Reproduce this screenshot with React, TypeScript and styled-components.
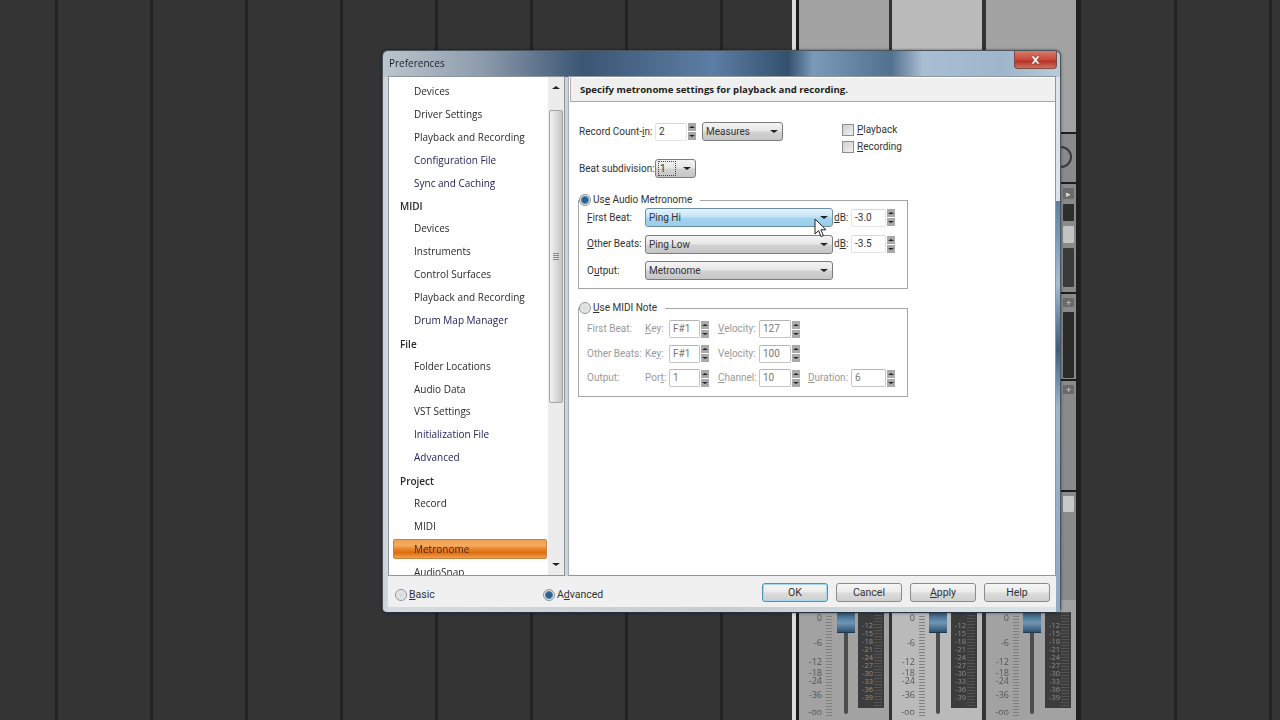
import styled, { createGlobalStyle } from "styled-components";

const GlobalStyle = createGlobalStyle`
  html, body {
    margin: 0;
    padding: 0;
    background: #333;
  }
  #root {
    width: 1280px;
    height: 720px;
    overflow: hidden;
  }
`;

const Stage = styled.div`
  position: relative;
  width: 1280px;
  height: 720px;
  overflow: hidden;
  display: flex;
  font-family: "Open Sans", "Liberation Sans", sans-serif;
  filter: blur(0.35px);
`;

// background of the daw: empty dark tracks and the mixer strips
const Track = styled.div<{ $w: number }>`
  flex: none;
  width: ${(p) => p.$w}px;
  height: 100%;
  background: #343434;
  border-right: 3px solid #232323;
`;

const LightEdge = styled.div`
  flex: none;
  width: 4px;
  background: #dcdcdc;
  border-right: 3px solid #1c1c1c;
`;

const Strip = styled.div<{ $tone: string; $gap: number }>`
  flex: none;
  position: relative;
  width: 90px;
  height: 100%;
  margin-right: ${(p) => p.$gap}px;
  background: ${(p) => p.$tone};
  display: flex;
  flex-direction: column;
  justify-content: flex-end;
`;

const EndLine = styled.div`
  flex: none;
  width: 5px;
  background: #202020;
`;

const Rack = styled.div`
  position: absolute;
  top: 0;
  right: 0;
  width: 15px;
  height: 100%;
  padding-top: 132px;
  box-sizing: border-box;
  display: flex;
  flex-direction: column;
`;

const RackSection = styled.div<{ $h: number }>`
  flex: none;
  height: ${(p) => p.$h}px;
  box-sizing: border-box;
  border-top: 2px solid #1d1d1d;
  background: #8a8a8a;
  padding: 4px 2px 0;
  display: flex;
  flex-direction: column;
  gap: 5px;
`;

const RackBlock = styled.div<{ $h: number; $tone: string }>`
  flex: none;
  height: ${(p) => p.$h}px;
  background: ${(p) => p.$tone};
  border-radius: 1px;
  color: #ddd;
  font-size: 9px;
  line-height: ${(p) => p.$h}px;
  text-align: center;
`;

const Knob = styled.div`
  width: 22px;
  height: 22px;
  margin: 8px 0 0 -13px;
  box-sizing: border-box;
  border: 2px solid #3a3a3a;
  border-radius: 50%;
`;

const FaderArea = styled.div`
  position: relative;
  flex: none;
  height: 108px;
`;

const ScaleLabel = styled.span<{ $y: number }>`
  position: absolute;
  top: ${(p) => p.$y}px;
  left: 4px;
  width: 19px;
  text-align: right;
  font-size: 9px;
  line-height: 8px;
  color: #555;
`;

const Ticks = styled.div`
  position: absolute;
  left: 27px;
  top: 4px;
  width: 6px;
  height: 101px;
  background: repeating-linear-gradient(#7f7f7f 0 1px, transparent 1px 3px);
`;

const FaderSlot = styled.div<{ $x: number }>`
  position: absolute;
  left: ${(p) => p.$x + 7}px;
  top: 10px;
  width: 4px;
  height: 92px;
  background: #4c4c4c;
  border-radius: 2px;
`;

const FaderCap = styled.div<{ $x: number }>`
  position: absolute;
  left: ${(p) => p.$x}px;
  top: 0;
  width: 18px;
  height: 20px;
  background: linear-gradient(#2e5170, #5d87a8 40%, #6f95b3 55%, #2f5271);
  border-bottom: 1px solid #20384e;
`;

const Meter = styled.div`
  position: absolute;
  left: 59px;
  top: 0;
  width: 26px;
  height: 96px;
  background: #3c3c3c;
  padding-top: 9px;
  box-sizing: border-box;
`;

const MeterLabel = styled.div`
  width: 15px;
  height: 8px;
  text-align: right;
  font-size: 7.5px;
  line-height: 8px;
  color: #8f8f8f;
`;

const Bars = styled.div`
  position: absolute;
  right: 2px;
  top: 0;
  width: 8px;
  height: 100%;
  background: repeating-linear-gradient(#555 0 1px, #3c3c3c 1px 3px);
`;

// the preferences dialog floats over the mixer
const Dialog = styled.div`
  position: absolute;
  left: 382px;
  top: 50px;
  width: 679px;
  height: 563px;
  box-sizing: border-box;
  padding: 0 4px 5px 5px;
  border-radius: 6px 6px 5px 5px;
  border: 1px solid #4b5560;
  border-bottom-color: #26323d;
  background:
    linear-gradient(90deg, #bcc5cd 0, #8c9bab 100px, #3b5574 200px, #5c7ea4 330px, #33506e 405px, #7b9ab9 430px, #52708f 508px, #a9bed2 540px, #9eb5cb 620px, #b9cada 100%) top / 100% 26px no-repeat,
    linear-gradient(90deg, #c9d1d8 0, #d5dbe0 6px, #c6ccd2 340px, #dce4ea 100%) top 26px left / 100% 100% no-repeat;
  display: flex;
  flex-direction: column;
  box-shadow: 0 0 3px rgba(0, 0, 0, 0.5);
`;

const SideGlass = styled.div`
  position: absolute;
  right: 0;
  top: 150px;
  width: 4px;
  bottom: 0;
  background: linear-gradient(#5e7d9e, #a4bdd2 20%, #3f5c7c 36%, #9db6cc 50%, #8fa9c0 100%);
`;

const TitleBar = styled.div`
  flex: none;
  height: 25px;
  display: flex;
  align-items: center;
  justify-content: space-between;
`;

const Title = styled.span`
  font-size: 10px;
  color: #1b2229;
  margin: -1px 0 0 1px;
`;

const CloseButton = styled.button`
  width: 43px;
  height: 18px;
  margin: -7px -1px 0 0;
  padding: 0;
  border: 1px solid #7a4a44;
  border-top: none;
  border-radius: 0 0 4px 4px;
  background: linear-gradient(#d97a6c, #c84b3b 50%, #b53527 60%, #d0705f);
  display: flex;
  align-items: center;
  justify-content: center;
`;

const Body = styled.div`
  flex: 1;
  min-height: 0;
  display: flex;
  gap: 3px;
`;

const ListPane = styled.div`
  flex: none;
  width: 177px;
  box-sizing: border-box;
  background: #fff;
  border: 1px solid #8e979e;
  display: flex;
  position: relative;
`;

const List = styled.div`
  flex: 1;
  min-width: 0;
  overflow: hidden;
  padding: 4px 1px 0 4px;
`;

const ListRow = styled.div<{ $kind: "sub" | "head" | "link" | "sel" }>`
  height: 20px;
  margin-bottom: 2.9px;
  box-sizing: border-box;
  padding-left: ${(p) => (p.$kind === "head" ? 7 : 21)}px;
  font-size: 10px;
  line-height: ${(p) => (p.$kind === "head" ? 22 : 20)}px;
  white-space: nowrap;
  font-weight: ${(p) => (p.$kind === "head" ? 600 : 400)};
  color: ${(p) => (p.$kind === "link" ? "#23235e" : p.$kind === "sel" ? "#4a2a2a" : "#2a2a2a")};
  ${(p) =>
    p.$kind === "sel" &&
    `background: linear-gradient(#f0a050, #f5ac60 30%, #e8862c 50%, #dd6c10 70%, #f0a050);
     border: 1px solid #c9803a;
     border-radius: 2px;
     line-height: 18px;
     padding-left: 20px;`}
`;

const ScrollColumn = styled.div`
  flex: none;
  width: 16px;
  background: #ececec;
  display: flex;
  flex-direction: column;
  align-items: center;
`;

const ScrollEnd = styled.div`
  flex: none;
  height: 21px;
  width: 100%;
  display: flex;
  align-items: center;
  justify-content: center;
`;

const ScrollTrack = styled.div`
  flex: 1;
  width: 100%;
`;

const ScrollThumb = styled.div`
  width: 14px;
  height: 293px;
  margin: 12px 0 0 1px;
  box-sizing: border-box;
  border: 1px solid #a4a4a4;
  border-radius: 2px;
  background: linear-gradient(90deg, #f2f2f2, #dcdcdc 50%, #c4c4c4);
  display: flex;
  align-items: center;
  justify-content: center;
`;

const Grip = styled.div`
  width: 6px;
  height: 7px;
  background: repeating-linear-gradient(#8a8a8a 0 1px, transparent 1px 2px);
`;

const Arrow = styled.div<{ $up?: boolean; $size?: number }>`
  flex: none;
  width: 0;
  height: 0;
  border-left: ${(p) => p.$size ?? 4}px solid transparent;
  border-right: ${(p) => p.$size ?? 4}px solid transparent;
  ${(p) => (p.$up ? "border-bottom" : "border-top")}: ${(p) => (p.$size ?? 4) - 1}px solid #222;
`;

const Panel = styled.div`
  flex: 1;
  min-width: 0;
  box-sizing: border-box;
  background: #fff;
  border: 1px solid #8e979e;
  border-left-color: #aab;
  padding: 0;
`;

const PanelHeader = styled.div`
  height: 23px;
  margin: 1px 0 0 1px;
  padding-left: 9px;
  background: #f0f0f0;
  border-bottom: 1px solid #a8a8a8;
  border-left: 1px solid #b0b0b0;
  font-size: 9.6px;
  font-weight: 700;
  line-height: 24px;
  color: #1c1c1c;
`;

const PanelBody = styled.div`
  padding: 20px 0 0 10px;
  display: flex;
  flex-direction: column;
  font-family: Roboto, "Open Sans", sans-serif;
`;

const TopRows = styled.div`
  display: grid;
  grid-template-columns: 263px auto;
  height: 71px;
`;

const Line = styled.div<{ $gap?: number }>`
  display: flex;
  align-items: center;
  gap: ${(p) => p.$gap ?? 0}px;
`;

const Label = styled.span<{ $w?: number; $off?: boolean }>`
  flex: none;
  width: ${(p) => (p.$w ? `${p.$w}px` : "auto")};
  font-size: 10px;
  line-height: 12px;
  color: ${(p) => (p.$off ? "#9a9a9a" : "#333")};
  white-space: nowrap;
`;

const TextBox = styled.div<{ $w: number; $off?: boolean }>`
  flex: none;
  width: ${(p) => p.$w}px;
  height: 18px;
  box-sizing: border-box;
  padding-left: 3px;
  border: 1px solid ${(p) => (p.$off ? "#c4c4c4" : "#e4e4e4")};
  border-top-color: ${(p) => (p.$off ? "#b4b4b4" : "#d8d8d8")};
  border-radius: 2px;
  font-size: 10px;
  line-height: 16px;
  color: ${(p) => (p.$off ? "#777" : "#333")};
`;

const SpinWrap = styled.div`
  flex: none;
  width: 8px;
  height: 17px;
  margin: 0 1px;
  display: flex;
  flex-direction: column;
  gap: 1px;
`;

const SpinPart = styled.div<{ $off?: boolean }>`
  flex: 1;
  background: ${(p) => (p.$off ? "#aaa" : "#a8a8a8")};
  display: flex;
  align-items: center;
  justify-content: center;
`;

const Select = styled.div<{ $w: number; $hot?: boolean }>`
  flex: none;
  width: ${(p) => p.$w}px;
  height: 19px;
  box-sizing: border-box;
  padding: 0 4px 0 3px;
  border: 1px solid ${(p) => (p.$hot ? "#6a8ea6" : "#7c7c7c")};
  border-radius: 3px;
  background: ${(p) =>
    p.$hot
      ? "linear-gradient(#e6f4fc, #c2e3f6 48%, #a3d4f0 52%, #9acdea)"
      : "linear-gradient(#f4f4f4, #e6e6e6 48%, #d2d2d2 52%, #c6c6c6)"};
  display: flex;
  align-items: center;
  justify-content: space-between;
  font-size: 10px;
  color: #333;
`;

const FocusValue = styled.span`
  border: 1px dotted #444;
  padding: 0 9px 0 1px;
  line-height: 13px;
  margin-left: -1px;
`;

const Checks = styled.div`
  display: flex;
  flex-direction: column;
  gap: 5px;
  margin-top: 2px;
`;

const CheckBox = styled.div`
  flex: none;
  width: 12px;
  height: 12px;
  box-sizing: border-box;
  border: 1px solid #8e8e8e;
  background: linear-gradient(135deg, #cfcfcf, #f0f0f0);
`;

const Radio = styled.div<{ $on?: boolean }>`
  flex: none;
  width: 12px;
  height: 12px;
  box-sizing: border-box;
  border: 1px solid #8e9499;
  border-radius: 50%;
  background: ${(p) =>
    p.$on ? "radial-gradient(circle, #2f5f8a 0 2.5px, #4f86ad 3.5px, #dfe6ea 4.5px)" : "radial-gradient(circle, #d8d8d8, #efefef)"};
`;

const Group = styled.fieldset<{ $h: number; $top?: number }>`
  margin: ${(p) => p.$top ?? 0}px 0 0 -1px;
  box-sizing: border-box;
  width: 330px;
  height: ${(p) => p.$h}px;
  border: 1px solid #a6a6a6;
  padding: 0 0 0 8px;
`;

const GroupTitle = styled.legend`
  padding: 0 8px 0 0;
  margin-left: -8px;
  display: flex;
  align-items: center;
  gap: 2px;
  font-size: 10px;
  line-height: 14px;
  color: #333;
`;

const BeatRows = styled.div<{ $gap: number; $top: number }>`
  display: flex;
  flex-direction: column;
  gap: ${(p) => p.$gap}px;
  margin-top: ${(p) => p.$top}px;
`;

const Footer = styled.div`
  flex: none;
  height: 31px;
  background: #f0f0f0;
  display: flex;
  align-items: center;
  position: relative;
  font-family: Roboto, "Open Sans", sans-serif;
`;

const FooterChoice = styled.div<{ $w: number; $left?: number }>`
  flex: none;
  width: ${(p) => p.$w}px;
  margin: 6px 0 0 ${(p) => p.$left ?? 0}px;
  display: flex;
  align-items: center;
  gap: 2px;
  font-size: 10.5px;
  color: #333;
`;

const ButtonRow = styled.div`
  margin-left: auto;
  margin-right: 6px;
  margin-top: 2px;
  display: flex;
  gap: 8px;
`;

const DialogButton = styled.button<{ $primary?: boolean }>`
  width: 66px;
  height: 19px;
  padding: 0;
  box-sizing: border-box;
  border: 1px solid ${(p) => (p.$primary ? "#4f93b3" : "#8a8a8a")};
  border-radius: 3px;
  box-shadow: ${(p) => (p.$primary ? "inset 0 0 0 1px #a5d8ee" : "none")};
  background: linear-gradient(#f6f6f6, #ebebeb 48%, #dcdcdc 52%, #cfcfcf);
  font-family: inherit;
  font-size: 10.5px;
  color: #333;
`;

const Pointer = styled.svg`
  position: absolute;
  left: 814px;
  top: 218px;
`;

const listRows: { text: string; kind: "sub" | "head" | "link" | "sel" }[] = [
  { text: "Devices", kind: "sub" },
  { text: "Driver Settings", kind: "sub" },
  { text: "Playback and Recording", kind: "sub" },
  { text: "Configuration File", kind: "link" },
  { text: "Sync and Caching", kind: "link" },
  { text: "MIDI", kind: "head" },
  { text: "Devices", kind: "sub" },
  { text: "Instruments", kind: "sub" },
  { text: "Control Surfaces", kind: "sub" },
  { text: "Playback and Recording", kind: "sub" },
  { text: "Drum Map Manager", kind: "link" },
  { text: "File", kind: "head" },
  { text: "Folder Locations", kind: "sub" },
  { text: "Audio Data", kind: "sub" },
  { text: "VST Settings", kind: "sub" },
  { text: "Initialization File", kind: "link" },
  { text: "Advanced", kind: "link" },
  { text: "Project", kind: "head" },
  { text: "Record", kind: "sub" },
  { text: "MIDI", kind: "sub" },
  { text: "Metronome", kind: "sel" },
  { text: "AudioSnap", kind: "sub" },
];

const scaleMarks = [
  { t: "0", y: 2 },
  { t: "-6", y: 27 },
  { t: "-12", y: 46 },
  { t: "-18", y: 57 },
  { t: "-24", y: 65 },
  { t: "-36", y: 79 },
  { t: "-oo", y: 96 },
];

const meterMarks = ["-12", "-15", "-18", "-21", "-24", "-27", "-30", "-33", "-36", "-39"];

const Fader = ({ capX }: { capX: number }) => (
  <FaderArea>
    {scaleMarks.map((m) => (
      <ScaleLabel key={m.t} $y={m.y}>
        {m.t}
      </ScaleLabel>
    ))}
    <Ticks />
    <FaderSlot $x={capX} />
    <FaderCap $x={capX} />
    <Meter>
      {meterMarks.map((m) => (
        <MeterLabel key={m}>{m}</MeterLabel>
      ))}
      <Bars />
    </Meter>
  </FaderArea>
);

const Spinner = ({ off }: { off?: boolean }) => (
  <SpinWrap>
    <SpinPart $off={off}>
      <Arrow $up $size={3.5} />
    </SpinPart>
    <SpinPart $off={off}>
      <Arrow $size={3.5} />
    </SpinPart>
  </SpinWrap>
);

const MidiRow = ({
  name,
  keyLabel,
  keyValue,
  midLabel,
  midValue,
  children,
}: {
  name: string;
  keyLabel: React.ReactNode;
  keyValue: string;
  midLabel: React.ReactNode;
  midValue: string;
  children?: React.ReactNode;
}) => (
  <Line>
    <Label $w={58} $off>
      {name}
    </Label>
    <Label $w={24} $off>
      {keyLabel}
    </Label>
    <TextBox $w={31} $off>
      {keyValue}
    </TextBox>
    <Spinner off />
    <Label $w={41} $off style={{ marginLeft: 8 }}>
      {midLabel}
    </Label>
    <TextBox $w={32} $off>
      {midValue}
    </TextBox>
    <Spinner off />
    {children}
  </Line>
);

export default function App() {
  return (
    <Stage>
      <GlobalStyle />
      <Track $w={55} />
      <Track $w={92} />
      <Track $w={92} />
      <Track $w={92} />
      <Track $w={92} />
      <Track $w={92} />
      <Track $w={92} />
      <Track $w={92} />
      <Track $w={69} style={{ borderRight: "none" }} />
      <LightEdge />
      <Strip $tone="#a2a2a2" $gap={3}>
        <Fader capX={38} />
      </Strip>
      <Strip $tone="#bababa" $gap={4}>
        <Fader capX={37} />
      </Strip>
      <Strip $tone="#a2a2a2" $gap={0}>
        <Rack>
          <RackSection $h={50}>
            <Knob />
          </RackSection>
          <RackSection $h={110}>
            <RackBlock $h={11} $tone="#6a6a6a">▸</RackBlock>
            <RackBlock $h={17} $tone="#2e2e2e" />
            <RackBlock $h={17} $tone="#c4c4c4" />
            <RackBlock $h={39} $tone="#3a3a3a" />
          </RackSection>
          <RackSection $h={87}>
            <RackBlock $h={9} $tone="#6a6a6a">+</RackBlock>
            <RackBlock $h={66} $tone="#2a2a2a" />
          </RackSection>
          <RackSection $h={111}>
            <RackBlock $h={9} $tone="#6a6a6a">+</RackBlock>
          </RackSection>
          <RackSection $h={110}>
            <RackBlock $h={16} $tone="#c8c8c8" />
          </RackSection>
        </Rack>
        <Fader capX={37} />
      </Strip>
      <EndLine />
      <Track $w={93} />
      <Track $w={92} />
      <Track $w={7} style={{ borderRight: "none" }} />

      <Dialog>
        <SideGlass />
        <TitleBar>
          <Title>Preferences</Title>
          <CloseButton aria-label="Close">
            <svg width="11" height="10" viewBox="0 0 11 10">
              <path d="M1 1h2.6l1.9 2.2L7.4 1H10L6.8 5 10 9H7.4L5.5 6.8 3.6 9H1l3.2-4z" fill="#fff" stroke="#7a3a30" strokeWidth="0.5" />
            </svg>
          </CloseButton>
        </TitleBar>
        <Body>
          <ListPane>
            <List>
              {listRows.map((r, i) => (
                <ListRow key={i} $kind={r.kind}>
                  {r.text}
                </ListRow>
              ))}
            </List>
            <ScrollColumn>
              <ScrollEnd>
                <Arrow $up />
              </ScrollEnd>
              <ScrollTrack>
                <ScrollThumb>
                  <Grip />
                </ScrollThumb>
              </ScrollTrack>
              <ScrollEnd>
                <Arrow />
              </ScrollEnd>
            </ScrollColumn>
          </ListPane>
          <Panel>
            <PanelHeader>Specify metronome settings for playback and recording.</PanelHeader>
            <PanelBody>
              <TopRows>
                <div>
                  <Line style={{ height: 19 }}>
                    <Label $w={76}>
                      Record Count-<u>i</u>n:
                    </Label>
                    <TextBox $w={32}>2</TextBox>
                    <Spinner />
                    <Select $w={81} style={{ marginLeft: 5 }}>
                      Measures
                      <Arrow />
                    </Select>
                  </Line>
                  <Line style={{ height: 19, marginTop: 18 }}>
                    <Label $w={76}>Beat subdivision:</Label>
                    <Select $w={41}>
                      <FocusValue>1</FocusValue>
                      <Arrow />
                    </Select>
                  </Line>
                </div>
                <Checks>
                  <Line $gap={3}>
                    <CheckBox />
                    <Label>
                      <u>P</u>layback
                    </Label>
                  </Line>
                  <Line $gap={3}>
                    <CheckBox />
                    <Label>
                      <u>R</u>ecording
                    </Label>
                  </Line>
                </Checks>
              </TopRows>
              <Group $h={96}>
                <GroupTitle>
                  <Radio $on />
                  <span>
                    Us<u>e</u> Audio Metronome
                  </span>
                </GroupTitle>
                <BeatRows $gap={7.5} $top={1}>
                  <Line>
                    <Label $w={58}>
                      <u>F</u>irst Beat:
                    </Label>
                    <Select $w={188} $hot>
                      Ping Hi
                      <Arrow />
                    </Select>
                    <Label $w={17} style={{ marginLeft: 1 }}>
                      <u>d</u>B:
                    </Label>
                    <TextBox $w={35}>-3.0</TextBox>
                    <Spinner />
                  </Line>
                  <Line>
                    <Label $w={58}>
                      <u>O</u>ther Beats:
                    </Label>
                    <Select $w={188}>
                      Ping Low
                      <Arrow />
                    </Select>
                    <Label $w={17} style={{ marginLeft: 1 }}>
                      d<u>B</u>:
                    </Label>
                    <TextBox $w={35}>-3.5</TextBox>
                    <Spinner />
                  </Line>
                  <Line>
                    <Label $w={58}>
                      O<u>u</u>tput:
                    </Label>
                    <Select $w={188}>
                      Metronome
                      <Arrow />
                    </Select>
                  </Line>
                </BeatRows>
              </Group>
              <Group $h={96} $top={12}>
                <GroupTitle>
                  <Radio />
                  <span>
                    <u>U</u>se MIDI Note
                  </span>
                </GroupTitle>
                <BeatRows $gap={6.5} $top={5}>
                  <MidiRow
                    name="First Beat:"
                    keyLabel={
                      <>
                        <u>K</u>ey:
                      </>
                    }
                    keyValue="F#1"
                    midLabel={
                      <>
                        <u>V</u>elocity:
                      </>
                    }
                    midValue="127"
                  />
                  <MidiRow
                    name="Other Beats:"
                    keyLabel={
                      <>
                        Ke<u>y</u>:
                      </>
                    }
                    keyValue="F#1"
                    midLabel={
                      <>
                        Ve<u>l</u>ocity:
                      </>
                    }
                    midValue="100"
                  />
                  <MidiRow
                    name="Output:"
                    keyLabel={
                      <>
                        Por<u>t</u>:
                      </>
                    }
                    keyValue="1"
                    midLabel={
                      <>
                        <u>C</u>hannel:
                      </>
                    }
                    midValue="10"
                  >
                    <Label $w={43} $off style={{ marginLeft: 7 }}>
                      <u>D</u>uration:
                    </Label>
                    <TextBox $w={35} $off>
                      6
                    </TextBox>
                    <Spinner off />
                  </MidiRow>
                </BeatRows>
              </Group>
            </PanelBody>
          </Panel>
        </Body>
        <Footer>
          <FooterChoice $w={148} $left={7}>
            <Radio />
            <span>
              <u>B</u>asic
            </span>
          </FooterChoice>
          <FooterChoice $w={80}>
            <Radio $on />
            <span>
              A<u>d</u>vanced
            </span>
          </FooterChoice>
          <ButtonRow>
            <DialogButton $primary>OK</DialogButton>
            <DialogButton>Cancel</DialogButton>
            <DialogButton>
              <u>A</u>pply
            </DialogButton>
            <DialogButton>Help</DialogButton>
          </ButtonRow>
        </Footer>
      </Dialog>

      <Pointer width="13" height="21" viewBox="0 0 13 21">
        <path d="M1 1v15l3.6-3.4 2.4 6 2.4-1-2.5-5.8H12z" fill="#fff" stroke="#222" strokeWidth="1" />
      </Pointer>
    </Stage>
  );
}
